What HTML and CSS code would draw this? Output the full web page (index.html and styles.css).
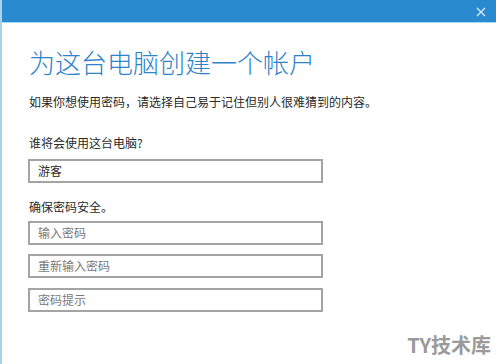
FILE: index.html
```html
<!DOCTYPE html>
<html>
<head>
    <meta charset="utf-8">
    <title>为这台电脑创建一个帐户</title>
    <link rel="stylesheet" href="styles.css">
</head>
<body>
<div class="window">
    <div class="titlebar">
        <svg class="close" width="10" height="10" viewBox="0 0 10 10">
            <path d="M1 1 L9 9 M9 1 L1 9" stroke="#d8ecfa" stroke-width="1.3" fill="none"/>
        </svg>
    </div>
    <div class="content">
        <div class="title">为这台电脑创建一个帐户</div>
        <div class="sub-title">如果你想使用密码，请选择自己易于记住但别人很难猜到的内容。</div>
        <div class="label label-first">谁将会使用这台电脑?</div>
        <div class="field field-first">游客</div>
        <div class="label">确保密码安全。</div>
        <div class="field field-pw placeholder">输入密码</div>
        <div class="field placeholder">重新输入密码</div>
        <div class="field field-last placeholder">密码提示</div>
    </div>
    <div class="mark">TY技术库</div>
</div>
</body>
</html>
```

FILE: styles.css
```css
html, body {
margin: 0;
padding: 0;
background: #fff;
}
.window {
position: relative;
width: 496px;
height: 364px;
box-sizing: border-box;
border-left: 2px solid #a9d3ea;
font-family: "Noto Sans CJK SC", sans-serif;
overflow: hidden;
}
.titlebar {
height: 22px;
background-color: #2a8acf;
border-bottom: 1px solid #a8dcf6;
display: flex;
justify-content: flex-end;
align-items: center;
padding-right: 10px;
}
.close {
display: block;
margin-top: 2px;
}
.content {
padding-left: 26px;
}
.title {
margin-top: 21px;
padding-left: 1px;
font-size: 26px;
line-height: 36px;
font-weight: 300;
color: #2f83c8;
}
.sub-title {
margin-top: 13px;
padding-left: 1px;
font-size: 12px;
line-height: 18px;
color: #2a2a2a;
}
.label {
margin-top: 15px;
padding-left: 1px;
font-size: 12px;
line-height: 18px;
color: #2a2a2a;
}
.label-first {
margin-top: 23px;
}
.field {
width: 295px;
height: 24px;
box-sizing: border-box;
border: 2px solid #a4a4a4;
padding-left: 8px;
margin-top: 9px;
font-size: 12px;
line-height: 20px;
color: #2a2a2a;
}
.field-first {
margin-top: 7px;
}
.field-pw {
margin-top: 5px;
}
.field-last {
margin-top: 10px;
}
.placeholder {
color: #7a7a7a;
}
.mark {
position: absolute;
right: 5px;
bottom: 8px;
font-family: "Noto Sans CJK SC", sans-serif;
font-weight: bold;
font-size: 20px;
line-height: 22px;
color: #9a9a9a;
}
```
